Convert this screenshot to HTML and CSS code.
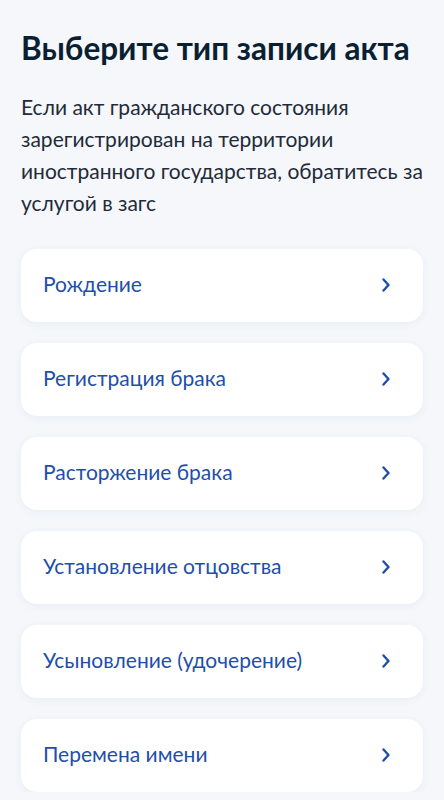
FILE: index.html
```html
<!DOCTYPE html>
<html lang="ru">
<head>
<meta charset="utf-8">
<link rel="stylesheet" href="styles.css">
</head>
<body>
<main class="page">
  <h1 class="title">Выберите тип записи акта</h1>
  <p class="lead">Если акт гражданского состояния зарегистрирован на территории иностранного государства, обратитесь за услугой в загс</p>
  <ul class="list">
    <li class="card"><span class="card-text">Рождение</span><svg class="chev" viewBox="0 0 10 14" width="10" height="14"><path d="M2.5 1.5 L7.5 7 L2.5 12.5" fill="none" stroke="currentColor" stroke-width="2.4" stroke-linecap="round" stroke-linejoin="round"/></svg></li>
    <li class="card"><span class="card-text">Регистрация брака</span><svg class="chev" viewBox="0 0 10 14" width="10" height="14"><path d="M2.5 1.5 L7.5 7 L2.5 12.5" fill="none" stroke="currentColor" stroke-width="2.4" stroke-linecap="round" stroke-linejoin="round"/></svg></li>
    <li class="card"><span class="card-text">Расторжение брака</span><svg class="chev" viewBox="0 0 10 14" width="10" height="14"><path d="M2.5 1.5 L7.5 7 L2.5 12.5" fill="none" stroke="currentColor" stroke-width="2.4" stroke-linecap="round" stroke-linejoin="round"/></svg></li>
    <li class="card"><span class="card-text">Установление отцовства</span><svg class="chev" viewBox="0 0 10 14" width="10" height="14"><path d="M2.5 1.5 L7.5 7 L2.5 12.5" fill="none" stroke="currentColor" stroke-width="2.4" stroke-linecap="round" stroke-linejoin="round"/></svg></li>
    <li class="card"><span class="card-text">Усыновление (удочерение)</span><svg class="chev" viewBox="0 0 10 14" width="10" height="14"><path d="M2.5 1.5 L7.5 7 L2.5 12.5" fill="none" stroke="currentColor" stroke-width="2.4" stroke-linecap="round" stroke-linejoin="round"/></svg></li>
    <li class="card"><span class="card-text">Перемена имени</span><svg class="chev" viewBox="0 0 10 14" width="10" height="14"><path d="M2.5 1.5 L7.5 7 L2.5 12.5" fill="none" stroke="currentColor" stroke-width="2.4" stroke-linecap="round" stroke-linejoin="round"/></svg></li>
  </ul>
</main>
</body>
</html>
```

FILE: styles.css
```css
html, body {
  margin: 0;
  padding: 0;
  background: #f5f7fb;
}
body {
  font-family: Lato, "Noto Sans", sans-serif;
  color: #0b1f33;
}
.page {
  padding: 28px 21px 0 21px;
}
.title {
  margin: 0;
  font-size: 31.5px;
  line-height: 40px;
  font-weight: 700;
  color: #0b1f33;
}
.lead {
  margin: 23px 0 0 0;
  font-size: 21px;
  line-height: 32px;
  color: #1f2b38;
}
.list {
  list-style: none;
  margin: 30px 0 0 0;
  padding: 0;
  display: flex;
  flex-direction: column;
  gap: 21px;
}
.card {
  height: 73px;
  box-sizing: border-box;
  background: #ffffff;
  border-radius: 16px;
  box-shadow: 0 2px 8px rgba(30, 60, 120, 0.06);
  display: flex;
  align-items: center;
  justify-content: space-between;
  padding: 0 32px 0 22px;
  color: #1f4fa8;
}
.card-text {
  font-size: 21px;
  line-height: 26px;
  padding-bottom: 3px;
}
.chev {
  display: block;
  color: #1f4fa8;
  margin-bottom: 1px;
}
```
